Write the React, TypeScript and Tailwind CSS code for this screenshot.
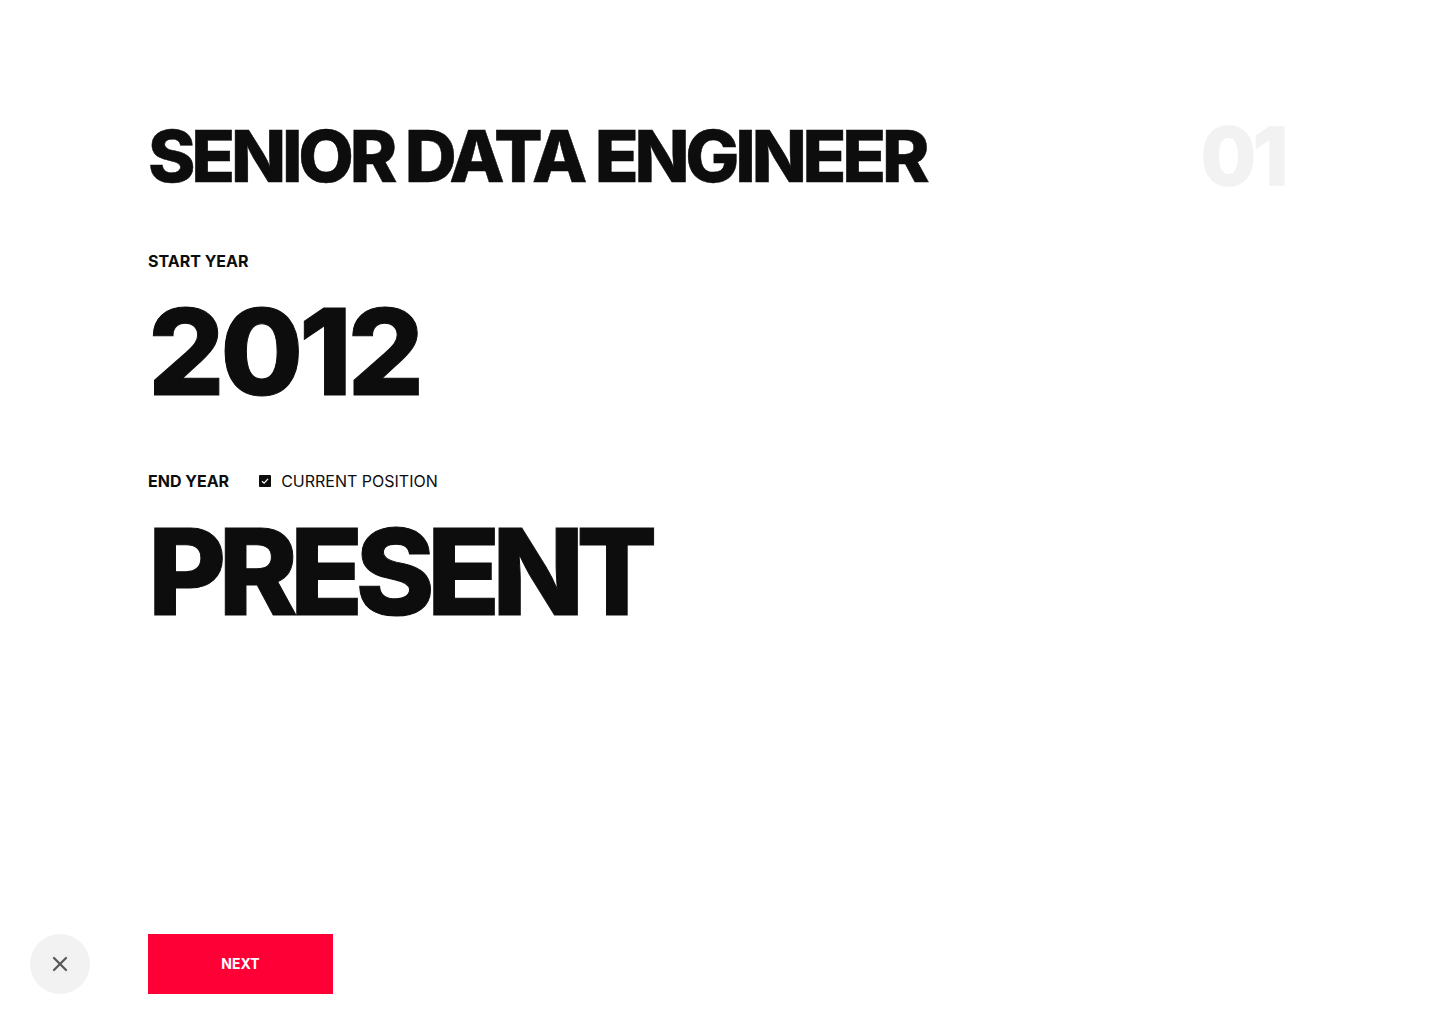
import { X } from "lucide-react";

export default function App() {
  return (
    <div className="h-[1024px] w-[1440px] bg-white font-['Inter',sans-serif] text-[#0d0d0d] flex flex-col justify-between pl-[30px] pb-[30px] pt-[112px] overflow-hidden">
      <div className="pl-[118px] pr-[155px]">
        <div className="flex items-start justify-between">
          <h1 className="text-[72px] leading-[88px] font-extrabold tracking-[-0.0585em] [-webkit-text-stroke:0.5px_currentColor]">SENIOR DATA ENGINEER</h1>
          <div className="text-[80px] leading-[88px] font-extrabold tracking-[-0.04em] text-[#f2f2f2] [-webkit-text-stroke:1.5px_currentColor]">01</div>
        </div>
        <div className="mt-[49px] text-base leading-6 font-bold">START YEAR</div>
        <div className="mt-[11px] text-[120px] leading-[136px] font-extrabold tracking-[-0.036em] [-webkit-text-stroke:1px_currentColor]">2012</div>
        <div className="mt-[49px] flex items-center h-6">
          <span className="text-base leading-6 font-bold">END YEAR</span>
          <span className="ml-[30px] flex items-center gap-[10px] text-base leading-6">
            <span className="flex h-3 w-3 items-center justify-center rounded-[1px] bg-[#0d0d0d]">
              <svg width="8" height="8" viewBox="0 0 8 8" fill="none" stroke="white" strokeWidth="1.2"><path d="M1 4.2 3.1 6.2 7 1.8" /></svg>
            </span>
            CURRENT POSITION
          </span>
        </div>
        <div className="mt-[11px] text-[120px] leading-[136px] font-extrabold tracking-[-0.065em] [-webkit-text-stroke:1px_currentColor]">PRESENT</div>
      </div>
      <div className="flex items-center">
        <button className="flex h-[60px] w-[60px] items-center justify-center rounded-full bg-[#f2f2f2] text-[#595959]">
          <X size={24} strokeWidth={2.25} />
        </button>
        <button className="ml-[58px] h-[60px] w-[185px] bg-[#ff0036] text-sm font-bold text-white">NEXT</button>
      </div>
    </div>
  );
}
